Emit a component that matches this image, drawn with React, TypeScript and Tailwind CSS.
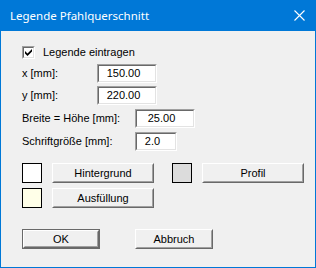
import type { ReactNode } from "react";

const font = { fontFamily: '"Liberation Sans", Arial, sans-serif' };

function Field({ value, width }: { value: string; width: string }) {
    return (
        <div className={`${width} h-[19px] border border-t-[#a0a0a0] border-l-[#a0a0a0] border-b-white border-r-white`}>
            <div className="w-full h-full bg-white border border-t-[#696969] border-l-[#696969] border-b-[#e3e3e3] border-r-[#e3e3e3] flex items-center justify-center pr-[7px] text-[11px] text-black">
                {value}
            </div>
        </div>
    );
}

function Button({ children, width, h = "h-[20px]", isDefault = false }: { children: ReactNode; width: string; h?: string; isDefault?: boolean }) {
    const inner = (
        <div className="w-full h-full border border-t-white border-l-white border-b-[#696969] border-r-[#696969]">
            <div className="w-full h-full bg-[#f0f0f0] border border-t-[#f0f0f0] border-l-[#f0f0f0] border-b-[#a0a0a0] border-r-[#a0a0a0] flex items-center justify-center text-[11px] text-black">
                {children}
            </div>
        </div>
    );
    return isDefault ? (
        <div className={`${width} ${h} border border-[#696969]`}>{inner}</div>
    ) : (
        <div className={`${width} ${h}`}>{inner}</div>
    );
}

function Swatch({ color }: { color: string }) {
    return <div className={`w-[20px] h-[20px] border border-black ${color}`} />;
}

export default function App() {
    return (
        <div className="w-[316px] h-[268px] bg-[#0078d7] flex flex-col" style={font}>
            {/* Title bar */}
            <div className="h-[31px] flex items-center justify-between pl-[10px] pr-[11px]">
                <span className="text-white text-[11.5px]" style={{ fontFamily: '"Noto Sans", "Open Sans", sans-serif' }}>
                    Legende Pfahlquerschnitt
                </span>
                <svg width="11" height="11" viewBox="0 0 11 11" className="text-white">
                    <path d="M0.5 0.5 L10.5 10.5 M10.5 0.5 L0.5 10.5" stroke="currentColor" strokeWidth="1.1" />
                </svg>
            </div>

            {/* Body */}
            <div className="flex-1 mx-[1px] mb-[1px] bg-[#f0f0f0] pl-[21px] flex flex-col text-[11px] text-black">
                <div className="mt-[15px] h-[13px] flex items-center gap-[8px]">
                    <div className="w-[13px] h-[13px] border border-t-[#a0a0a0] border-l-[#a0a0a0] border-b-white border-r-white">
                        <div className="w-full h-full bg-white border border-t-[#696969] border-l-[#696969] border-b-[#e3e3e3] border-r-[#e3e3e3] flex items-center justify-center">
                            <svg width="7" height="7" viewBox="0 0 7 7">
                                <path d="M0 2 L0 4.5 L2.5 7 L7 2.5 L7 0 L2.5 4.5 Z" fill="black" />
                            </svg>
                        </div>
                    </div>
                    <span>Legende eintragen</span>
                </div>

                <div className="mt-[5px] flex items-center">
                    <span className="w-[75px]">x [mm]:</span>
                    <Field value="150.00" width="w-[60px]" />
                </div>
                <div className="mt-[3px] flex items-center">
                    <span className="w-[75px]">y [mm]:</span>
                    <Field value="220.00" width="w-[60px]" />
                </div>
                <div className="mt-[4px] flex items-center">
                    <span className="w-[113px]">Breite = Höhe [mm]:</span>
                    <Field value="25.00" width="w-[60px]" />
                </div>
                <div className="mt-[4px] flex items-center">
                    <span className="w-[113px]">Schriftgröße [mm]:</span>
                    <Field value="2.0" width="w-[42px]" />
                </div>

                <div className="mt-[12px] flex items-start">
                    <Swatch color="bg-white" />
                    <div className="ml-[10px]">
                        <Button width="w-[102px]">Hintergrund</Button>
                    </div>
                    <div className="ml-[18px]">
                        <Swatch color="bg-[#dcdcdc]" />
                    </div>
                    <div className="ml-[10px]">
                        <Button width="w-[102px]">Profil</Button>
                    </div>
                </div>
                <div className="mt-[5px] flex items-start">
                    <Swatch color="bg-[#ffffe8]" />
                    <div className="ml-[10px]">
                        <Button width="w-[102px]">Ausfüllung</Button>
                    </div>
                </div>

                <div className="mt-[21px] flex items-start gap-[35px]">
                    <Button width="w-[78px]" h="h-[20px]" isDefault>OK</Button>
                    <Button width="w-[78px]" h="h-[20px]">Abbruch</Button>
                </div>
            </div>
        </div>
    );
}
